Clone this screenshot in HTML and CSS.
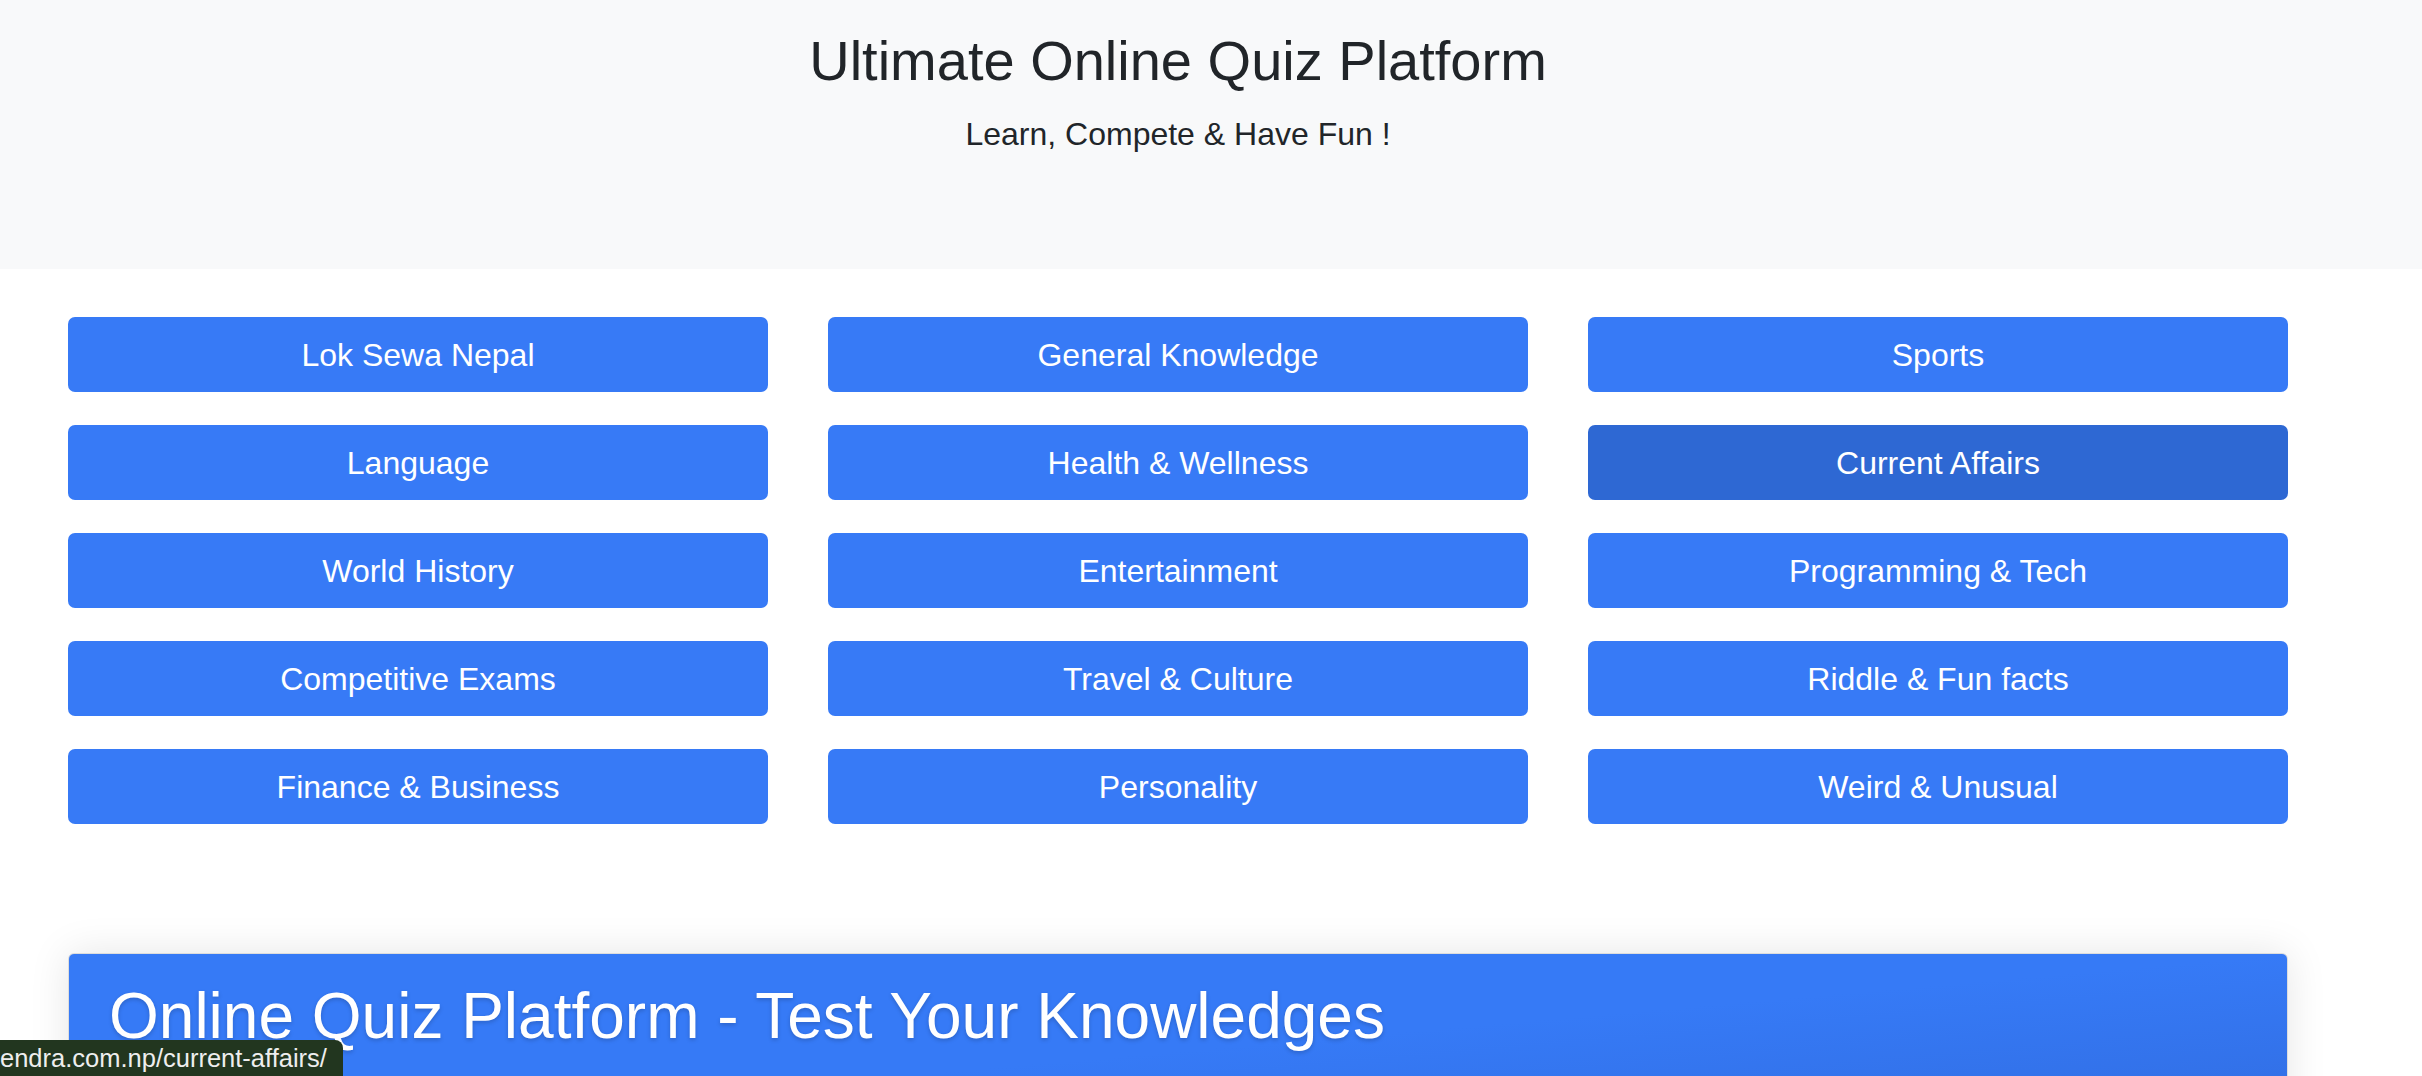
FILE: index.html
```html
<!DOCTYPE html>
<html lang="en">
<head>
<meta charset="utf-8">
<title>Ultimate Online Quiz Platform</title>
<link rel="stylesheet" href="styles.css">
</head>
<body>
<header class="hero">
  <div class="wrap">
    <h1 class="hero-title">Ultimate Online Quiz Platform</h1>
    <p class="hero-sub">Learn, Compete &amp; Have Fun !</p>
  </div>
</header>
<main class="wrap">
  <nav class="cats">
    <a class="cat" href="#">Lok Sewa Nepal</a>
    <a class="cat" href="#">General Knowledge</a>
    <a class="cat" href="#">Sports</a>
    <a class="cat" href="#">Language</a>
    <a class="cat" href="#">Health &amp; Wellness</a>
    <a class="cat cat-hover" href="#">Current Affairs</a>
    <a class="cat" href="#">World History</a>
    <a class="cat" href="#">Entertainment</a>
    <a class="cat" href="#">Programming &amp; Tech</a>
    <a class="cat" href="#">Competitive Exams</a>
    <a class="cat" href="#">Travel &amp; Culture</a>
    <a class="cat" href="#">Riddle &amp; Fun facts</a>
    <a class="cat" href="#">Finance &amp; Business</a>
    <a class="cat" href="#">Personality</a>
    <a class="cat" href="#">Weird &amp; Unusual</a>
  </nav>
  <section class="intro">
    <h2 class="intro-title">Online Quiz Platform - Test Your Knowledges</h2>
  </section>
</main>
<div class="status">endra.com.np/current-affairs/</div>
</body>
</html>
```
FILE: styles.css
```css
html, body {
  margin: 0;
  padding: 0;
  background: #ffffff;
  font-family: "Liberation Sans", Arial, sans-serif;
  color: #212529;
  overflow: hidden;
}

.wrap {
  width: 2220px;
  margin-left: 68px;
}

.hero {
  background: #f8f9fa;
  height: 269px;
  box-sizing: border-box;
  padding-top: 27px;
}

.hero-title {
  margin: 0 0 16px;
  font-size: 56px;
  font-weight: 400;
  line-height: 1.2;
  text-align: center;
}

.hero-sub {
  margin: 0;
  font-size: 32px;
  line-height: 1.5;
  text-align: center;
}

.cats {
  display: grid;
  grid-template-columns: repeat(3, 700px);
  column-gap: 60px;
  row-gap: 33px;
  margin-top: 48px;
}

.cat {
  display: flex;
  align-items: center;
  justify-content: center;
  height: 75px;
  padding-top: 2px;
  box-sizing: border-box;
  background: #377af6;
  color: #ffffff;
  text-decoration: none;
  font-size: 32px;
  border-radius: 7px;
}

.cat-hover {
  background: #2e68d3;
}

.intro {
  margin-top: 129px;
  height: 320px;
  box-sizing: border-box;
  padding: 24px 40px 0;
  border: 1px solid #dddddd;
  border-radius: 6px;
  background: linear-gradient(175deg, #367af6 0%, #367af6 38%, #2c62d2 100%);
  box-shadow: 0 0 40px rgba(0, 0, 0, 0.10);
}

.intro-title {
  margin: 0;
  color: #ffffff;
  font-size: 64px;
  font-weight: 400;
  line-height: 1.2;
  text-shadow: 0 2px 4px rgba(0, 0, 0, 0.18);
}

.status {
  position: fixed;
  left: 0;
  bottom: 0;
  width: 343px;
  height: 36px;
  box-sizing: border-box;
  background: #22361f;
  color: #eeeeee;
  font-size: 25.5px;
  line-height: 36px;
  white-space: nowrap;
  border-top-right-radius: 8px;
  overflow: hidden;
}
```
